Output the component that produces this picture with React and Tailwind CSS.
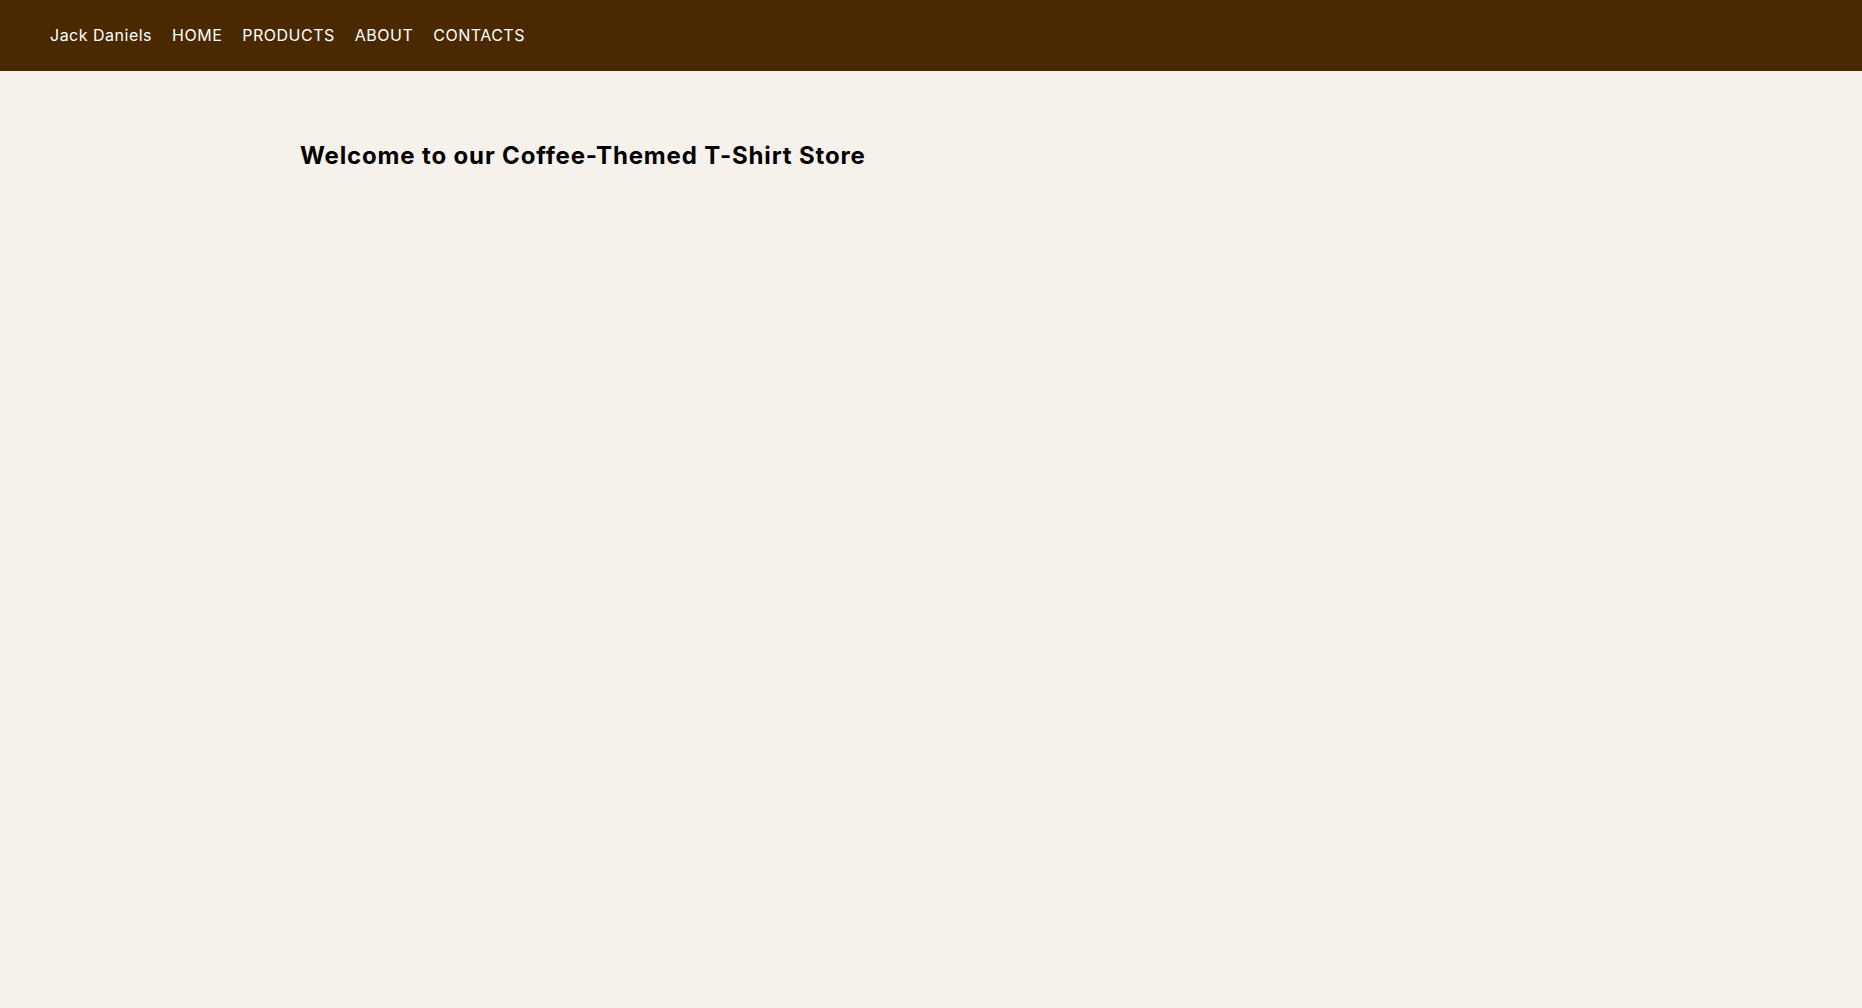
export default function App() {
  const links = ["HOME", "PRODUCTS", "ABOUT", "CONTACTS"];

  return (
    <div className="min-h-screen bg-[#f6f1ea] font-['Inter',sans-serif]">
      <nav className="h-[71px] bg-[#4a2900] flex items-center gap-5 px-[50px] pb-[2px] text-white text-[16px] tracking-[0.5px]">
        <span>Jack Daniels</span>
        {links.map((l) => (
          <a key={l} href="#" className="text-white">
            {l}
          </a>
        ))}
      </nav>

      <main className="pl-[300px] pt-[69px]">
        <h1 className="text-[24px] leading-8 font-bold tracking-[0.85px] text-black">
          Welcome to our Coffee-Themed T-Shirt Store
        </h1>
      </main>
    </div>
  );
}
